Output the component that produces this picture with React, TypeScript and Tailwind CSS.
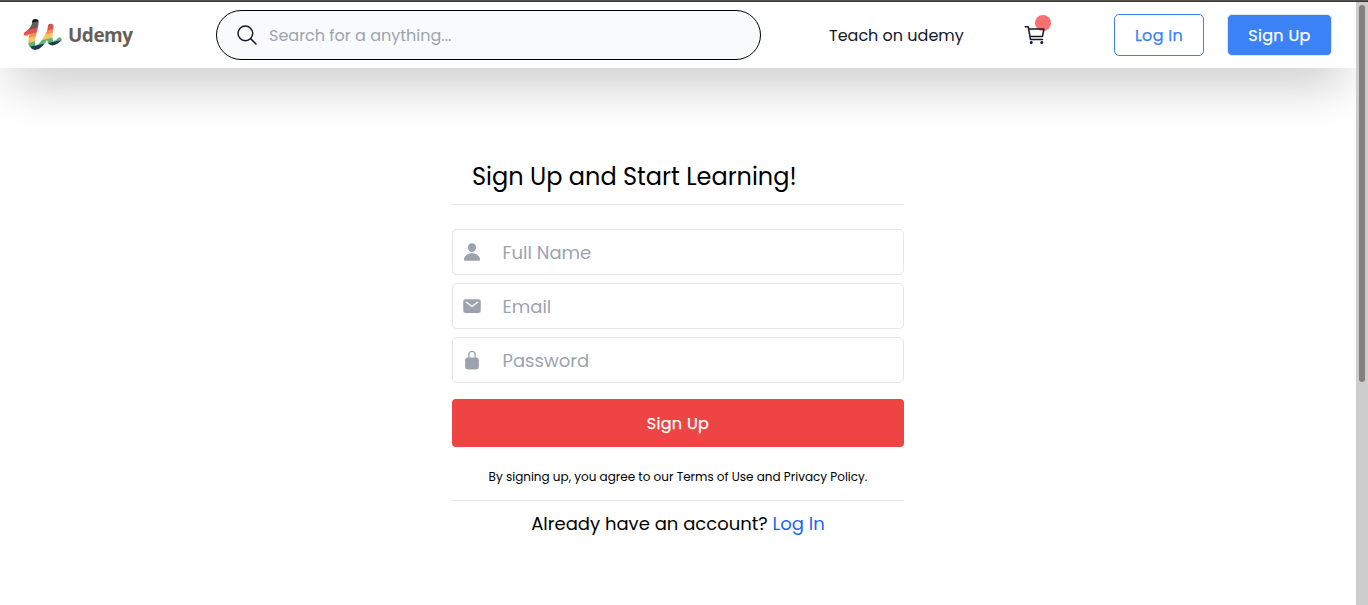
import type { ReactNode } from "react";
import {
  IoCartOutline,
  IoLockClosed,
  IoMail,
  IoPerson,
  IoSearchOutline,
} from "react-icons/io5";

function LogoMark() {
  return (
    <svg className="h-[34px] w-[40px] shrink-0" viewBox="0 0 120 102" aria-hidden="true">
      <defs>
        <mask id="mark" maskUnits="userSpaceOnUse" x="0" y="0" width="120" height="102">
          <g fill="none" stroke="#fff" strokeLinecap="round" strokeLinejoin="round">
            <path d="M9 48C18 42 26 36 32 24" strokeWidth="13" />
            <path d="M37 13C36 32 24 56 26 77" strokeWidth="20" />
            <path d="M27 81C30 93 44 91 54 80C64 68 76 50 83 28" strokeWidth="13" />
            <path d="M83 26C82 42 77 56 82 70" strokeWidth="17" />
            <path d="M82 73C88 80 100 74 110 64" strokeWidth="12" />
          </g>
        </mask>
      </defs>
      <g mask="url(#mark)">
        <rect width="120" height="102" fill="#12171c" />
        <path d="M-10 19L130 -2V120H-10Z" fill="#655c55" />
        <path d="M-10 41L130 8V120H-10Z" fill="#e2504f" />
        <path d="M-10 54L130 26V120H-10Z" fill="#f0924c" />
        <path d="M-10 64L130 37V120H-10Z" fill="#f5c464" />
        <path d="M-10 80L130 51V120H-10Z" fill="#5cb374" />
        <path d="M-10 92L130 64V120H-10Z" fill="#1c3a50" />
      </g>
    </svg>
  );
}

function Field({ icon, label, type }: { icon: ReactNode; label: string; type: string }) {
  return (
    <label className="flex h-[46px] items-center rounded-[5px] border border-[#e5e7eb] pl-[9px] text-[20px] text-[#9ca3af]">
      {icon}
      <input
        type={type}
        placeholder={label}
        className="ml-[20.5px] min-w-0 flex-1 bg-transparent pt-[2px] text-[18px] leading-7 outline-none placeholder:text-[#9ca3af]"
      />
    </label>
  );
}

export default function App() {
  return (
    <div className="flex h-[605px] flex-col overflow-hidden bg-white font-['Poppins','Open_Sans',sans-serif] text-black">
      <div className="h-[2px] shrink-0 border-b border-[#3b3934] bg-[#57554e]" />
      <div className="flex min-h-0 flex-1">
        <div className="min-w-0 flex-1 overflow-hidden">
          <header className="flex h-[66px] items-center bg-white pl-[23px] text-[#111827] shadow-[0_25px_50px_-12px_rgba(0,0,0,0.25)]">
            <a href="#" className="flex w-[193px] items-center gap-[5px]">
              <LogoMark />
              <span className="font-['Open_Sans','Noto_Sans',sans-serif] text-[19px] font-bold leading-6 tracking-[-0.5px] text-[#685e56]">
                Udemy
              </span>
            </a>
            <div className="flex h-[50px] w-[545px] items-center rounded-full border border-black bg-[#f9fafb] pl-[18px]">
              <IoSearchOutline className="size-6" />
              <input
                placeholder="Search for a anything..."
                className="ml-[10px] flex-1 bg-transparent pt-[2px] text-[16px] leading-6 outline-none placeholder:text-[#9ca3af]"
              />
            </div>
            <a href="#" className="ml-[68px] w-[194px] pt-[2px] text-[16px]">
              Teach on udemy
            </a>
            <div className="relative mr-[67px] size-6">
              <span className="absolute -top-[8px] left-[12px] size-4 rounded-full bg-[#f87171]" />
              <IoCartOutline className="relative size-6" />
            </div>
            <button className="h-[42px] w-[90px] rounded-[5px] border border-[#3b82f6] pt-[2px] text-[16px] tracking-[0.3px] text-[#3b82f6] [-webkit-text-stroke:0.25px]">
              Log In
            </button>
            <button className="ml-[23px] h-[42px] w-[105px] rounded-[5px] border border-[#e5e7eb] bg-[#3b82f6] pt-[2px] text-[16px] tracking-[0.3px] text-white [-webkit-text-stroke:0.25px]">
              Sign Up
            </button>
          </header>
          <main className="mx-auto mt-[88px] w-[452px]">
            <h1 className="h-[49px] border-b border-[#e5e7eb] pl-5 pt-[5px] text-[24px] leading-8">
              Sign Up and Start Learning!
            </h1>
            <form className="mt-6 flex flex-col gap-2">
              <Field icon={<IoPerson />} label="Full Name" type="text" />
              <Field icon={<IoMail />} label="Email" type="email" />
              <Field icon={<IoLockClosed />} label="Password" type="password" />
              <button
                type="button"
                className="mt-2 h-12 rounded-[4px] bg-[#ef4444] pt-[2px] text-[16px] tracking-[0.3px] text-white [-webkit-text-stroke:0.25px]"
              >
                Sign Up
              </button>
            </form>
            <p className="h-[54px] border-b border-[#e5e7eb] pt-[22px] text-center text-[12px] leading-4">
              By signing up, you agree to our Terms of Use and Privacy Policy.
            </p>
            <p className="mt-[9px] text-center text-[18px] leading-7">
              Already have an account?{" "}
              <a href="#" className="text-[#2563eb]">
                Log In
              </a>
            </p>
          </main>
        </div>
        <div className="w-3 shrink-0 bg-[#cdcdcd] pl-[3px] pt-[3px]">
          <div className="h-[377px] w-[6px] rounded-full bg-[#82817b]" />
        </div>
      </div>
    </div>
  );
}
